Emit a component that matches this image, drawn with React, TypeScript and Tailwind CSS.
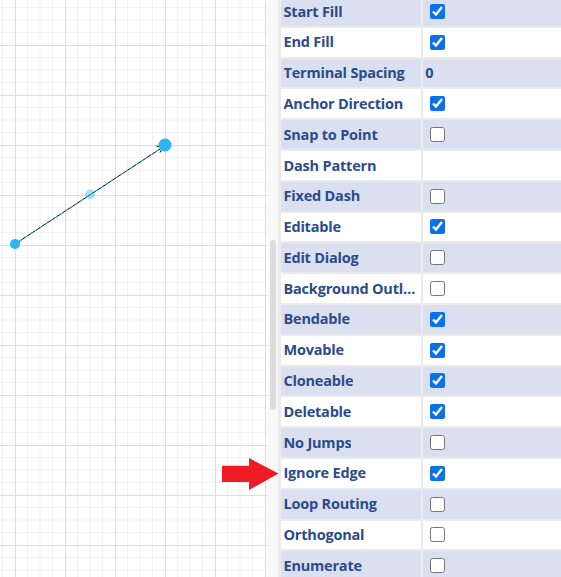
import React from 'react';

// Edge style properties panel with the diagram canvas on the left
const rows: { label: string; value: 'on' | 'off' | string }[] = [
  { label: 'Start Fill', value: 'on' },
  { label: 'End Fill', value: 'on' },
  { label: 'Terminal Spacing', value: '0' },
  { label: 'Anchor Direction', value: 'on' },
  { label: 'Snap to Point', value: 'off' },
  { label: 'Dash Pattern', value: '' },
  { label: 'Fixed Dash', value: 'off' },
  { label: 'Editable', value: 'on' },
  { label: 'Edit Dialog', value: 'off' },
  { label: 'Background Outline', value: 'off' },
  { label: 'Bendable', value: 'on' },
  { label: 'Movable', value: 'on' },
  { label: 'Cloneable', value: 'on' },
  { label: 'Deletable', value: 'on' },
  { label: 'No Jumps', value: 'off' },
  { label: 'Ignore Edge', value: 'on' },
  { label: 'Loop Routing', value: 'off' },
  { label: 'Orthogonal', value: 'off' },
  { label: 'Enumerate', value: 'off' },
];

function Checkbox({ checked }: { checked: boolean }) {
  return (
    <input
      type="checkbox"
      checked={checked}
      readOnly
      className="w-[15px] h-[15px] m-0 accent-[#0b70ec]"
    />
  );
}

function Canvas() {
  return (
    <svg width="268" height="577" className="block">
      <defs>
        <pattern id="grid" x="15" y="45" width="50" height="50" patternUnits="userSpaceOnUse">
          <rect width="50" height="50" fill="#ffffff" />
          <path d="M12.5 0V50M25 0V50M37.5 0V50M0 12.5H50M0 25H50M0 37.5H50" stroke="#f1f1f1" strokeWidth="1" />
          <path d="M0.5 0V50M0 0.5H50" stroke="#dedede" strokeWidth="1" />
        </pattern>
      </defs>
      <rect width="268" height="577" fill="url(#grid)" />
      <line x1="15" y1="244" x2="163" y2="147" stroke="#000" strokeWidth="1" />
      <line x1="15" y1="244" x2="163" y2="147" stroke="#29b6f2" strokeWidth="1" strokeDasharray="3 3" />
      <path d="M156.5 146.2L163 147L160 152.5" fill="none" stroke="#000" strokeWidth="1" />
      <circle cx="90" cy="194.5" r="5" fill="#29b6f2" fillOpacity="0.4" />
      <circle cx="15" cy="244" r="5" fill="#29b6f2" />
      <circle cx="165" cy="145" r="6.5" fill="#29b6f2" />
    </svg>
  );
}

export default function App() {
  return (
    <div className="relative flex w-[561px] h-[577px] overflow-hidden bg-white font-['Open_Sans',sans-serif]">
      <Canvas />
      <div className="w-[10px] h-full bg-[#f8f8f8] pt-[240px] px-[2px]">
        <div className="w-[6px] h-[170px] rounded-full bg-[#dcdcdc]" />
      </div>
      <div className="flex-1 h-full bg-[#ebebeb] pl-[2.5px]">
        <div className="flex flex-col gap-[2px] -mt-[3px]">
          {rows.map((row, i) => {
            const bg = i % 2 === 0 ? 'bg-[#dae0f0]' : 'bg-white';
            return (
              <div key={row.label} className="flex gap-[2.4px] h-[28.8px]">
                <div className={`${bg} w-[140.3px] shrink-0 flex items-center pl-[3px] pr-[4px] overflow-hidden`}>
                  <span className="truncate text-[14.5px] tracking-[-0.2px] font-bold text-[#2b4b8c]">{row.label}</span>
                </div>
                <div className={`${bg} flex-1 flex items-center pl-[7px]`}>
                  {row.value === 'on' && <Checkbox checked />}
                  {row.value === 'off' && <Checkbox checked={false} />}
                  {row.value !== 'on' && row.value !== 'off' && (
                    <span className="text-[14.5px] font-bold text-[#2b4b8c] -ml-[5px]">{row.value}</span>
                  )}
                </div>
              </div>
            );
          })}
        </div>
      </div>
      <svg width="58" height="34" className="absolute left-[221px] top-[457px]">
        <polygon points="1,8.7 28,8.7 28,1 57.5,16.5 28,33 28,25 1,25" fill="#ed1c24" />
      </svg>
    </div>
  );
}
